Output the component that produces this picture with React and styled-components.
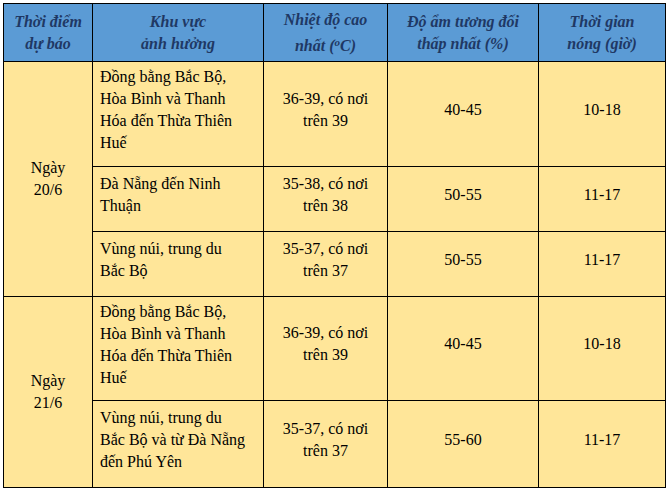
import React from "react";
import styled, { createGlobalStyle } from "styled-components";

const GlobalStyle = createGlobalStyle`
    html, body {
        margin: 0;
        padding: 0;
        background: #ffffff;
        font-family: "Times New Roman", Tinos, "Liberation Serif", serif;
    }
`

const Sheet = styled.div`
    padding: 3px 0 0 3px;
`
const Table = styled.table`
    border-collapse: collapse;
    table-layout: fixed;
    width: 663px;
    font-family: "Times New Roman", Tinos, "Liberation Serif", serif;
    font-size: 16px;
    line-height: 22px;
    color: #000000;
    border: 1px solid #000000;
`
const Row = styled.tr`
    height: ${(p) => p.$h}px;
`
const HeadCell = styled.th`
    background-color: #5b9bd5;
    color: #1f3864;
    font-family: "Times New Roman", Tinos, "Liberation Serif", serif;
    font-weight: 700;
    font-style: italic;
    text-align: center;
    vertical-align: middle;
    border: 1px solid #000000;
    padding: 0 4px;
`
const Degree = styled.span`
    font-size: 11px;
    vertical-align: 5px;
`
const Cell = styled.td`
    background-color: #ffe699;
    font-family: "Times New Roman", Tinos, "Liberation Serif", serif;
    border: 1px solid #000000;
    vertical-align: middle;
    text-align: ${(p) => (p.$left ? "left" : "center")};
    padding: ${(p) => (p.$date ? "0 4px" : p.$left ? "0 6px 8px 7px" : "0 6px 9px")};
`

const rows = [
    {
        date: ["Ngày", "20/6"],
        span: 3,
        h: 105,
        area: ["Đồng bằng Bắc Bộ,", "Hòa Bình và Thanh", "Hóa đến Thừa Thiên", "Huế"],
        temp: ["36-39, có nơi", "trên 39"],
        humid: "40-45",
        time: "10-18",
    },
    {
        h: 65,
        area: ["Đà Nẵng đến Ninh", "Thuận"],
        temp: ["35-38, có nơi", "trên 38"],
        humid: "50-55",
        time: "11-17",
    },
    {
        h: 65,
        area: ["Vùng núi, trung du", "Bắc Bộ"],
        temp: ["35-37, có nơi", "trên 37"],
        humid: "50-55",
        time: "11-17",
    },
    {
        date: ["Ngày", "21/6"],
        span: 2,
        h: 104,
        area: ["Đồng bằng Bắc Bộ,", "Hòa Bình và Thanh", "Hóa đến Thừa Thiên", "Huế"],
        temp: ["36-39, có nơi", "trên 39"],
        humid: "40-45",
        time: "10-18",
    },
    {
        h: 87,
        area: ["Vùng núi, trung du", "Bắc Bộ và từ Đà Nẵng", "đến Phú Yên"],
        temp: ["35-37, có nơi", "trên 37"],
        humid: "55-60",
        time: "11-17",
    },
];

function App() {
    return (
        <>
            <GlobalStyle />
            <Sheet>
                <Table>
                    <colgroup>
                        <col width="89" />
                        <col width="171" />
                        <col width="124" />
                        <col width="151" />
                        <col width="127" />
                    </colgroup>
                    <thead>
                        <Row $h={58}>
                            <HeadCell>Thời điểm<br />dự báo</HeadCell>
                            <HeadCell>Khu vực<br />ảnh hưởng</HeadCell>
                            <HeadCell>Nhiệt độ cao<br />nhất (<Degree>o</Degree>C)</HeadCell>
                            <HeadCell>Độ ẩm tương đối<br />thấp nhất (%)</HeadCell>
                            <HeadCell>Thời gian<br />nóng (giờ)</HeadCell>
                        </Row>
                    </thead>
                    <tbody>
                        {rows.map((r, i) => (
                            <Row key={i} $h={r.h}>
                                {r.date && (
                                    <Cell $date rowSpan={r.span}>
                                        {r.date[0]}<br />{r.date[1]}
                                    </Cell>
                                )}
                                <Cell $left>
                                    {r.area.map((t, j) => (
                                        <React.Fragment key={j}>
                                            {j > 0 && <br />}
                                            {t}
                                        </React.Fragment>
                                    ))}
                                </Cell>
                                <Cell>
                                    {r.temp[0]}<br />{r.temp[1]}
                                </Cell>
                                <Cell>{r.humid}</Cell>
                                <Cell>{r.time}</Cell>
                            </Row>
                        ))}
                    </tbody>
                </Table>
            </Sheet>
        </>
    );
}

export default App;
